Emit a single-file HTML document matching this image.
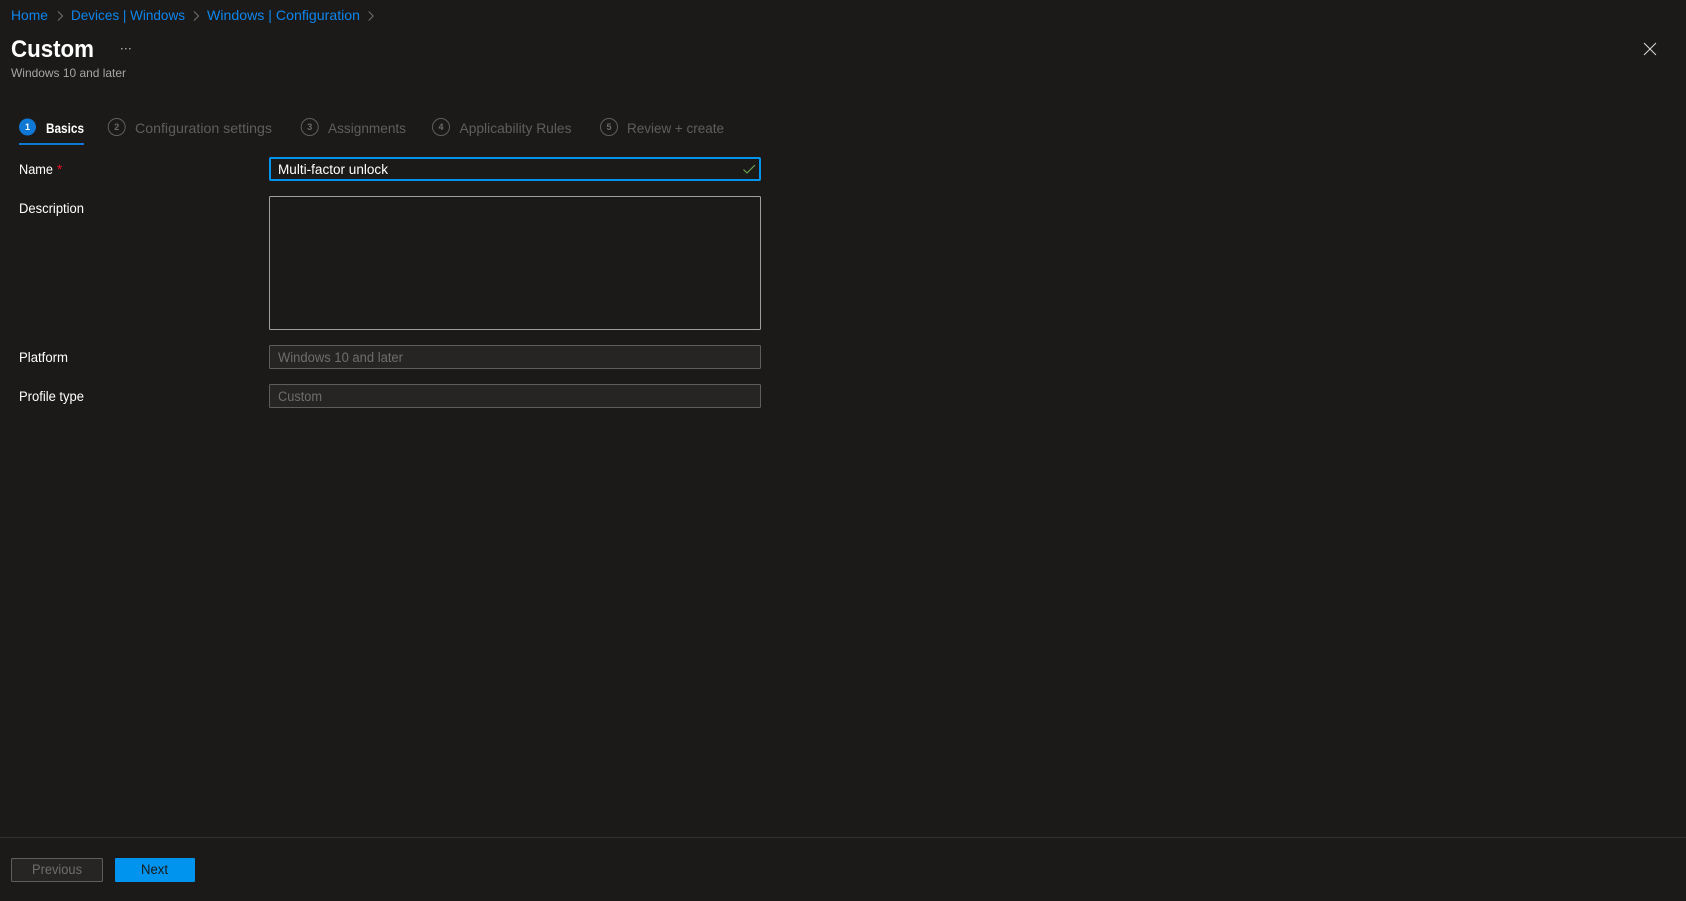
<!DOCTYPE html>
<html lang="en">
<head>
<meta charset="utf-8">
<title>Custom</title>
<style>
html,body{margin:0;padding:0;background:#1b1a19;width:1686px;height:901px;overflow:hidden}
svg{display:block}
text{font-family:"Liberation Sans",sans-serif;font-size:13.5px;fill:#fff;white-space:pre}
.link{fill:#0f85ec;font-size:14px}
.dim{fill:#6b6a69}
.step{fill:#5f5e5d;font-size:14px}
.num{font-size:9px;font-weight:bold;text-anchor:middle}
</style>
</head>
<body>
<svg width="1686" height="901" viewBox="0 0 1686 901" xmlns="http://www.w3.org/2000/svg">
<rect width="1686" height="901" fill="#1b1a19"/>

<!-- Breadcrumb -->
<text class="link" x="11" y="20" textLength="37" lengthAdjust="spacingAndGlyphs">Home</text>
<path d="M58 11.5l4.5 4.5-4.5 4.5" fill="none" stroke="#7a7877" stroke-width=".9"/>
<text class="link" x="71" y="20" textLength="114" lengthAdjust="spacingAndGlyphs">Devices | Windows</text>
<path d="M194 11.5l4.5 4.5-4.5 4.5" fill="none" stroke="#7a7877" stroke-width=".9"/>
<text class="link" x="207" y="20" textLength="153" lengthAdjust="spacingAndGlyphs">Windows | Configuration</text>
<path d="M368.7 11.5l4.5 4.5-4.5 4.5" fill="none" stroke="#7a7877" stroke-width=".9"/>

<!-- Title -->
<text x="11" y="57" style="font-size:24px;font-weight:bold" textLength="83" lengthAdjust="spacingAndGlyphs">Custom</text>
<g fill="#9a9998"><rect x="121" y="48" width="1.6" height="1.4"/><rect x="125" y="48" width="1.6" height="1.4"/><rect x="129" y="48" width="1.6" height="1.4"/></g>
<text x="11" y="77" style="font-size:12px;fill:#a6a5a4" textLength="115" lengthAdjust="spacingAndGlyphs">Windows 10 and later</text>
<path d="M1644 43l12 12M1656 43l-12 12" stroke="#d8d8d8" stroke-width="1" fill="none"/>

<!-- Steps -->
<circle cx="27.5" cy="127" r="8.5" fill="#0f78d4"/>
<text class="num" x="27.5" y="130">1</text>
<text x="46" y="133" style="font-size:14px;font-weight:bold" textLength="38" lengthAdjust="spacingAndGlyphs">Basics</text>
<rect x="19" y="143" width="65" height="2" fill="#0f78d4"/>

<circle cx="116.7" cy="127" r="8.5" fill="none" stroke="#605e5c"/>
<text class="num dim" x="116.7" y="130">2</text>
<text class="step" x="135" y="133" textLength="137" lengthAdjust="spacingAndGlyphs">Configuration settings</text>

<circle cx="309.7" cy="127" r="8.5" fill="none" stroke="#605e5c"/>
<text class="num dim" x="309.7" y="130">3</text>
<text class="step" x="328" y="133" textLength="78" lengthAdjust="spacingAndGlyphs">Assignments</text>

<circle cx="441" cy="127" r="8.5" fill="none" stroke="#605e5c"/>
<text class="num dim" x="441" y="130">4</text>
<text class="step" x="459.5" y="133" textLength="112" lengthAdjust="spacingAndGlyphs">Applicability Rules</text>

<circle cx="609" cy="127" r="8.5" fill="none" stroke="#605e5c"/>
<text class="num dim" x="609" y="130">5</text>
<text class="step" x="627" y="133" textLength="97" lengthAdjust="spacingAndGlyphs">Review + create</text>

<!-- Form labels -->
<text x="19" y="174" textLength="34" lengthAdjust="spacingAndGlyphs">Name</text>
<text x="57" y="174" style="fill:#e81123">*</text>
<text x="19" y="213" textLength="65" lengthAdjust="spacingAndGlyphs">Description</text>
<text x="19" y="362" textLength="49" lengthAdjust="spacingAndGlyphs">Platform</text>
<text x="19" y="401" textLength="65" lengthAdjust="spacingAndGlyphs">Profile type</text>

<!-- Name input -->
<rect x="270" y="158" width="490" height="22" rx="1" fill="#1b1a19" stroke="#0094ef" stroke-width="2"/>
<text x="278" y="174" textLength="110" lengthAdjust="spacingAndGlyphs">Multi-factor unlock</text>
<path d="M743.5 169.5l3.5 3.5 8-8" fill="none" stroke="#6ea84f" stroke-width="1.1"/>

<!-- Description -->
<rect x="269.5" y="196.5" width="491" height="133" rx="1" fill="#1b1a19" stroke="#a19f9d"/>

<!-- Platform -->
<rect x="269.5" y="345.5" width="491" height="23" rx="1" fill="#262524" stroke="#5e5d5c"/>
<text x="278" y="362" style="fill:#6e6d6c" textLength="125" lengthAdjust="spacingAndGlyphs">Windows 10 and later</text>

<!-- Profile type -->
<rect x="269.5" y="384.5" width="491" height="23" rx="1" fill="#262524" stroke="#5e5d5c"/>
<text x="278" y="401" style="fill:#6e6d6c" textLength="44" lengthAdjust="spacingAndGlyphs">Custom</text>

<!-- Footer -->
<rect x="0" y="837" width="1686" height="1" fill="#323130"/>
<rect x="11.5" y="858.5" width="91" height="23" rx="1" fill="#262524" stroke="#5e5d5c"/>
<text x="32" y="874" style="fill:#6e6d6c" textLength="50" lengthAdjust="spacingAndGlyphs">Previous</text>
<rect x="115" y="858" width="80" height="24" rx="1" fill="#0094ef"/>
<text x="141" y="874" style="fill:#1b1a19" textLength="27" lengthAdjust="spacingAndGlyphs">Next</text>
</svg>
</body>
</html>
